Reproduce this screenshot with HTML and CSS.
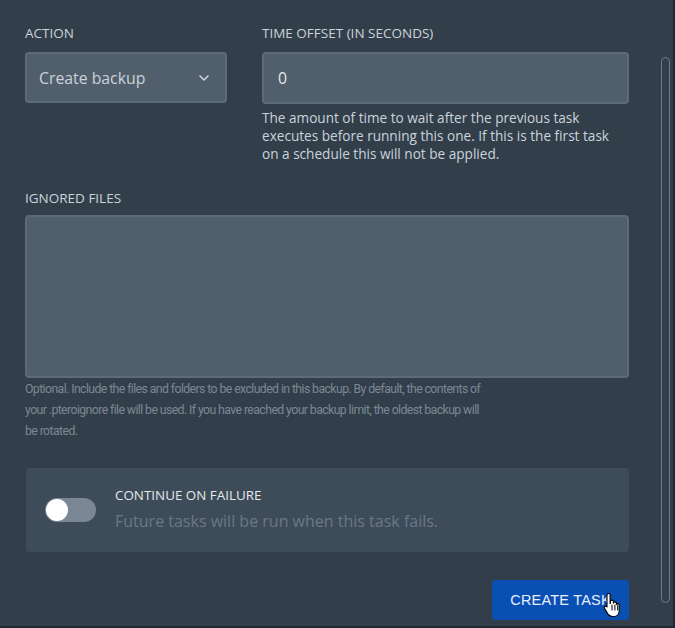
FILE: index.html
```html
<!DOCTYPE html>
<html>
<head>
<meta charset="utf-8">
<link rel="stylesheet" href="styles.css">
</head>
<body>
<div class="window">
  <div class="content">
    <div class="row">
      <div class="field action">
        <label class="label">Action</label>
        <div class="select">
          <span>Create backup</span>
          <svg class="chev" width="10" height="6" viewBox="0 0 10 6"><path d="M1 1l4 4 4-4" fill="none" stroke="#cbd2d9" stroke-width="1.6" stroke-linecap="round" stroke-linejoin="round"/></svg>
        </div>
      </div>
      <div class="field offset">
        <label class="label">Time offset (in seconds)</label>
        <div class="input">0</div>
        <p class="help">The amount of time to wait after the previous task executes before running this one. If this is the first task on a schedule this will not be applied.</p>
      </div>
    </div>
    <div class="field ignored">
      <label class="label">Ignored files</label>
      <div class="textarea"></div>
      <p class="optional">Optional. Include the files and folders to be excluded in this backup. By default, the contents of<br>your .pteroignore file will be used. If you have reached your backup limit, the oldest backup will<br>be rotated.</p>
    </div>
    <div class="card">
      <div class="toggle"><span class="knob"></span></div>
      <div class="card-text">
        <div class="card-title">Continue on failure</div>
        <div class="card-desc">Future tasks will be run when this task fails.</div>
      </div>
    </div>
    <div class="actions">
      <button class="btn">CREATE TASK
        <svg class="cursor" width="20" height="26" viewBox="0 0 20 26"><path d="M5.5 1.5c1 0 1.6.7 1.6 1.7v8.3l.3-.1V9.6c0-.9.7-1.5 1.5-1.5s1.5.6 1.5 1.5v1.6c.1-.8.8-1.3 1.5-1.3.8 0 1.5.6 1.5 1.5v1.2c.2-.6.8-1 1.4-1 .8 0 1.4.6 1.4 1.5v5.6c0 3.4-2.3 5.8-5.5 5.8h-1.2c-2 0-3.4-.8-4.5-2.4L1.6 16.6c-.5-.7-.4-1.6.3-2.1.7-.5 1.5-.3 2 .3l.1.2V3.2c0-1 .6-1.7 1.5-1.7z" fill="#fff" stroke="#000" stroke-width="1.1" stroke-linejoin="round"/><path d="M9 13v5M11.9 13v5M14.7 13.5v4.5" stroke="#000" stroke-width="1" stroke-linecap="round"/></svg>
      </button>
    </div>
  </div>
  <div class="scrollbar"><div class="thumb"></div></div>
</div>
</body>
</html>
```

FILE: styles.css
```css
* { box-sizing: border-box; }
html, body { margin: 0; padding: 0; }
body {
  background: #323f4b;
  font-family: "Open Sans", "Noto Sans", sans-serif;
  color: #cbd2d9;
}
.window {
  width: 675px;
  height: 628px;
  display: flex;
  border-right: 2px solid #1f2933;
  border-bottom: 2px solid #1f2933;
  overflow: hidden;
}
.content {
  width: 630px;
  padding: 24px 0 0 25px;
}
.row {
  display: flex;
  gap: 35px;
}
.action { width: 202px; }
.offset { width: 367px; }
.label {
  display: block;
  font-size: 13.5px;
  line-height: 18px;
  text-transform: uppercase;
  color: #cbd2d9;
  margin-bottom: 10px;
}
.select, .input {
  height: 51px;
  background: #515f6c;
  border: 2px solid #5d6a77;
  border-radius: 4px;
  display: flex;
  align-items: center;
  font-size: 15.8px;
  color: #e4e7eb;
}
.select {
  justify-content: space-between;
  padding: 0 16px 0 12px;
  color: #cbd2d9;
}
.input { padding: 0 14px; height: 52px; }
.help {
  margin: 5px 0 0;
  padding-right: 4px;
  font-size: 13.6px;
  line-height: 18px;
  color: #cbd2d9;
}
.ignored { margin-top: 26px; }
.ignored .label { margin-bottom: 8px; }
.textarea {
  width: 604px;
  height: 163px;
  background: #515f6c;
  border: 2px solid #5d6a77;
  border-radius: 4px;
}
.optional {
  margin: 1px 0 0;
  width: 604px;
  white-space: nowrap;
  font-family: "Roboto", sans-serif;
  font-size: 12.3px;
  letter-spacing: -0.6px;
  line-height: 21px;
  color: #7b8794;
}
.card {
  margin: 26px 0 0 1px;
  width: 603px;
  height: 84px;
  background: #3e4c59;
  border-radius: 4px;
  display: flex;
  align-items: flex-start;
  padding: 30px 0 0 19px;
}
.toggle {
  width: 51px;
  height: 24px;
  border-radius: 12px;
  background: #7b8794;
  position: relative;
  flex: none;
}
.knob {
  position: absolute;
  left: 1px;
  top: 1px;
  width: 22px;
  height: 22px;
  border-radius: 50%;
  background: #fff;
}
.card-text {
  margin: -12px 0 0 19px;
}
.card-title {
  font-size: 13.4px;
  line-height: 18px;
  text-transform: uppercase;
  color: #e4e7eb;
}
.card-desc {
  margin-top: 6px;
  font-size: 16px;
  line-height: 22px;
  color: #6b7886;
}
.actions {
  display: flex;
  justify-content: flex-end;
  margin-top: 28px;
  width: 604px;
}
.btn {
  position: relative;
  width: 137px;
  height: 40px;
  border: 0;
  border-radius: 4px;
  background: #0a4fb3;
  color: #e8f0ff;
  font-family: "Liberation Sans", Arial, sans-serif;
  font-size: 14.5px;
  letter-spacing: 0.2px;
  padding: 0;
}
.cursor {
  position: absolute;
  left: 111px;
  top: 12px;
}
.scrollbar {
  flex: none;
  width: 40px;
  padding: 57px 0 0 31px;
}
.thumb {
  width: 9px;
  height: 546px;
  border: 1px solid #6f7c89;
  border-radius: 5px;
}
```
